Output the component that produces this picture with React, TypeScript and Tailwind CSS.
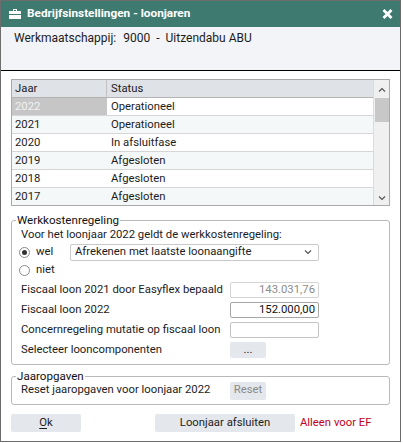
const years = [
  { year: "2022", status: "Operationeel" },
  { year: "2021", status: "Operationeel" },
  { year: "2020", status: "In afsluitfase" },
  { year: "2019", status: "Afgesloten" },
  { year: "2018", status: "Afgesloten" },
  { year: "2017", status: "Afgesloten" },
];

function ToolboxIcon() {
  return (
    <svg width="12" height="10" viewBox="0 0 12 10" fill="white">
      <path d="M4 0h4v2H7V1H5v1H4z" />
      <rect x="0" y="2" width="12" height="3" />
      <rect x="0" y="6" width="12" height="4" />
    </svg>
  );
}

function CloseIcon() {
  return (
    <svg width="11" height="10" viewBox="0 0 11 10">
      <path d="M1.5 1l8 8M9.5 1l-8 8" stroke="white" strokeWidth="2.8" />
    </svg>
  );
}

function Chevron({ up }: { up?: boolean }) {
  return (
    <svg width="8" height="5" viewBox="0 0 8 5">
      <path
        d={up ? "M1 4.5L4 1.5l3 3" : "M1 0.5l3 3 3-3"}
        stroke="#555"
        strokeWidth="1.2"
        fill="none"
      />
    </svg>
  );
}

function Radio({ checked }: { checked?: boolean }) {
  return (
    <span className="flex h-[11px] w-[11px] items-center justify-center rounded-full border border-[#8a8a8a] bg-white">
      {checked ? <span className="h-[5px] w-[5px] rounded-full bg-[#333]" /> : null}
    </span>
  );
}

function GroupBox({
  title,
  className,
  children,
}: {
  title: string;
  className?: string;
  children: React.ReactNode;
}) {
  return (
    <div className={`relative rounded-[3px] border border-[#b9b9b9] ${className ?? ""}`}>
      <span className="absolute -top-[9px] left-[4px] bg-white px-[1px] text-[11.6px] leading-[16px] text-[#111]">
        {title}
      </span>
      {children}
    </div>
  );
}

export default function App() {
  return (
    <div className="h-[443px] w-[403px] whitespace-nowrap bg-white font-['Roboto',sans-serif] text-[11.3px] text-[#1c1c1c]">
      <div className="flex h-[442px] w-[401px] flex-col border border-[#6d6d6d]">
        <div className="flex h-[26px] items-center bg-[#3f7a71] pl-[8px] pr-[7px] text-white">
          <ToolboxIcon />
          <span className="ml-[6px] text-[11.8px] font-bold">
            Bedrijfsinstellingen - loonjaren
          </span>
          <span className="ml-auto">
            <CloseIcon />
          </span>
        </div>

        <div className="flex h-[44px] items-start border-b border-black bg-[#f2f4f7] pl-[13px] pt-[3px] text-[12px] leading-[16px]">
          <span>Werkmaatschappij:</span>
          <span className="ml-[7px]">9000</span>
          <span className="ml-[6px]">-</span>
          <span className="ml-[6px]">Uitzendabu ABU</span>
        </div>

        <div className="flex flex-1 flex-col px-[10px] pt-[8px]">
          <div className="flex h-[127px] overflow-hidden border border-[#a9a9a9]">
            <div className="flex-1">
              <div className="grid h-[18px] grid-cols-[95px_1fr] border-b border-[#b3b3b3] bg-[#dfe2e6] leading-[17px]">
                <span className="border-r border-[#c2c2c2] pl-[3px]">Jaar</span>
                <span className="pl-[4px]">Status</span>
              </div>
              {years.map((row, i) => (
                <div
                  key={row.year}
                  className={`grid h-[18px] grid-cols-[95px_1fr] border-b border-[#d6d6d6] leading-[17px] ${
                    i % 2 === 1 ? "bg-[#f5f8f8]" : "bg-white"
                  }`}
                >
                  <span
                    className={`pl-[3px] ${i === 0 ? "bg-[#c6c6c6] text-[#f2f2f2]" : ""}`}
                  >
                    {row.year}
                  </span>
                  <span className="pl-[4px]">{row.status}</span>
                </div>
              ))}
            </div>
            <div className="flex w-[16px] flex-col items-center border-l border-[#dcdcdc] bg-[#f0f0f0]">
              <div className="flex h-[18px] items-center">
                <Chevron up />
              </div>
              <div className="h-[24px] w-[14px] bg-[#c8c8c8]" />
              <div className="mt-auto flex h-[14px] items-center">
                <Chevron />
              </div>
            </div>
          </div>

          <GroupBox title="Werkkostenregeling" className="mt-[14px] h-[145px] pl-[9px] pt-[6px]">
            <div className="h-[16px] leading-[16px]">
              Voor het loonjaar 2022 geldt de werkkostenregeling:
            </div>
            <div className="flex h-[18px] items-center">
              <span className="ml-[-2px]">
                <Radio checked />
              </span>
              <span className="ml-[6px] w-[34px]">wel</span>
              <div className="flex h-[17px] w-[249px] items-center justify-between rounded-[2px] border border-[#c9c9c9] pl-[4px] pr-[6px]">
                <span>Afrekenen met laatste loonaangifte</span>
                <Chevron />
              </div>
            </div>
            <div className="flex h-[18px] items-center">
              <span className="ml-[-2px]">
                <Radio />
              </span>
              <span className="ml-[6px]">niet</span>
            </div>
            <div className="mt-[1px] flex h-[20px] items-center">
              <span className="w-[209px]">Fiscaal loon 2021 door Easyflex bepaald</span>
              <div className="flex h-[16px] w-[89px] items-center justify-end rounded-[2px] border border-[#d4d4d4] pr-[3px] text-[#8c8c8c]">
                143.031,76
              </div>
            </div>
            <div className="flex h-[20px] items-center">
              <span className="w-[209px]">Fiscaal loon 2022</span>
              <div className="flex h-[16px] w-[89px] items-center justify-end rounded-[2px] border border-[#a6a6a6] pr-[3px] text-[#111]">
                152.000,00
              </div>
            </div>
            <div className="flex h-[20px] items-center">
              <span className="w-[209px]">Concernregeling mutatie op fiscaal loon</span>
              <div className="h-[16px] w-[89px] rounded-[2px] border border-[#c4c4c4]" />
            </div>
            <div className="flex h-[20px] items-center">
              <span className="w-[209px]">Selecteer looncomponenten</span>
              <button className="h-[16px] w-[36px] rounded-[2px] bg-[#e4e7eb] leading-[12px]">
                ...
              </button>
            </div>
          </GroupBox>

          <GroupBox title="Jaaropgaven" className="mt-[11px] flex h-[29px] items-center pl-[9px]">
            <span className="w-[209px]">Reset jaaropgaven voor loonjaar 2022</span>
            <button className="h-[18px] w-[36px] rounded-[2px] bg-[#e4e7eb] text-[#8a8a8a]">
              Reset
            </button>
          </GroupBox>

          <div className="mt-[9px] flex h-[18px] items-center">
            <button className="h-[18px] w-[70px] rounded-[2px] bg-[#e4e7eb]">
              <span className="underline underline-offset-2">O</span>k
            </button>
            <button className="ml-[74px] h-[18px] w-[140px] rounded-[2px] bg-[#e4e7eb]">
              Loonjaar afsluiten
            </button>
            <span className="ml-[5px] text-[#c4001c]">Alleen voor EF</span>
          </div>
        </div>
      </div>
    </div>
  );
}
